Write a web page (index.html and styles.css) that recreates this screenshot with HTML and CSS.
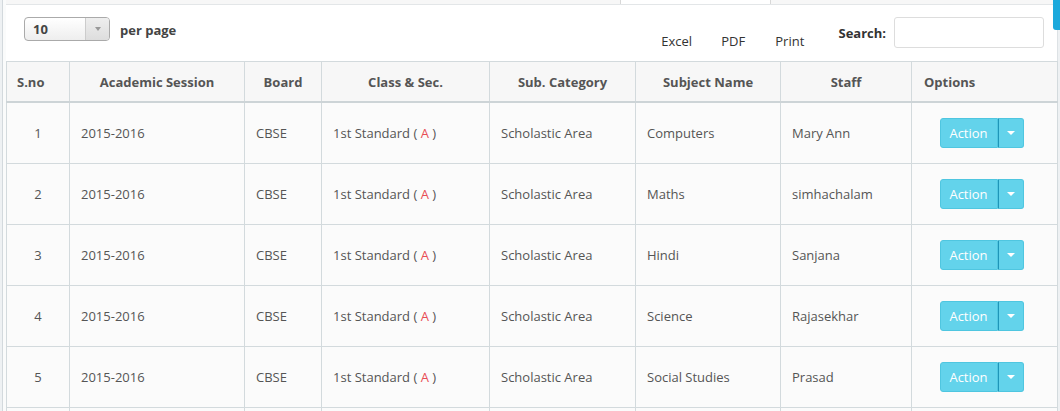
FILE: index.html
```html
<!DOCTYPE html>
<html>
<head>
<meta charset="utf-8">
<link rel="stylesheet" href="styles.css">
</head>
<body>
<div class="tab-blue"></div>
<div class="wrap">
  <div class="top-strip">
    <div class="strip-a"></div>
    <div class="strip-b"></div>
    <div class="strip-c"></div>
  </div>
  <div class="panel">
    <div class="toolbar">
      <div class="length">
        <div class="select">
          <span class="select-val">10</span>
          <span class="select-arrow"><span class="tri"></span></span>
        </div>
        <span class="per-page">per page</span>
      </div>
      <div class="exports">
        <span class="exp">Excel</span>
        <span class="exp">PDF</span>
        <span class="exp">Print</span>
      </div>
      <div class="search">
        <span class="search-label">Search:</span>
        <span class="search-input"></span>
      </div>
    </div>
    <table class="grid">
      <colgroup>
        <col class="c1"><col class="c2"><col class="c3"><col class="c4"><col class="c5"><col class="c6"><col class="c7"><col class="c8">
      </colgroup>
      <thead>
        <tr>
          <th class="left">S.no</th>
          <th>Academic Session</th>
          <th>Board</th>
          <th>Class &amp; Sec.</th>
          <th>Sub. Category</th>
          <th>Subject Name</th>
          <th>Staff</th>
          <th class="left opt">Options</th>
        </tr>
      </thead>
      <tbody>
        <tr>
          <td class="num">1</td><td>2015-2016</td><td>CBSE</td><td>1st Standard ( <span class="sec">A</span> )</td><td>Scholastic Area</td><td>Computers</td><td>Mary Ann</td>
          <td class="opts"><span class="btn-group"><span class="btn">Action</span><span class="btn caret-btn"><span class="caret"></span></span></span></td>
        </tr>
        <tr>
          <td class="num">2</td><td>2015-2016</td><td>CBSE</td><td>1st Standard ( <span class="sec">A</span> )</td><td>Scholastic Area</td><td>Maths</td><td>simhachalam</td>
          <td class="opts"><span class="btn-group"><span class="btn">Action</span><span class="btn caret-btn"><span class="caret"></span></span></span></td>
        </tr>
        <tr>
          <td class="num">3</td><td>2015-2016</td><td>CBSE</td><td>1st Standard ( <span class="sec">A</span> )</td><td>Scholastic Area</td><td>Hindi</td><td>Sanjana</td>
          <td class="opts"><span class="btn-group"><span class="btn">Action</span><span class="btn caret-btn"><span class="caret"></span></span></span></td>
        </tr>
        <tr>
          <td class="num">4</td><td>2015-2016</td><td>CBSE</td><td>1st Standard ( <span class="sec">A</span> )</td><td>Scholastic Area</td><td>Science</td><td>Rajasekhar</td>
          <td class="opts"><span class="btn-group"><span class="btn">Action</span><span class="btn caret-btn"><span class="caret"></span></span></span></td>
        </tr>
        <tr>
          <td class="num">5</td><td>2015-2016</td><td>CBSE</td><td>1st Standard ( <span class="sec">A</span> )</td><td>Scholastic Area</td><td>Social Studies</td><td>Prasad</td>
          <td class="opts"><span class="btn-group"><span class="btn">Action</span><span class="btn caret-btn"><span class="caret"></span></span></span></td>
        </tr>
        <tr class="empty">
          <td></td><td></td><td></td><td></td><td></td><td></td><td></td><td></td>
        </tr>
      </tbody>
    </table>
  </div>
</div>
</body>
</html>
```

FILE: styles.css
```css
* { box-sizing: border-box; }
html, body {
  margin: 0;
  padding: 0;
  height: 411px;
  overflow: hidden;
}
body {
  background: #eef1f3;
  font-family: "Open Sans", "Liberation Sans", sans-serif;
  font-size: 13px;
  color: #555;
  position: relative;
}
.tab-blue {
  position: absolute;
  right: 0;
  top: 0;
  width: 7px;
  height: 30px;
  background: #1ba9dc;
  border-bottom-left-radius: 3px;
  z-index: 5;
}
.wrap {
  margin-left: 2px;
  padding-left: 3px;
  border-left: 1px solid #d3d9dd;
  background: #fafbfb;
  width: 1056px;
}
.top-strip {
  height: 5px;
  display: flex;
  border-bottom: 1px solid #e3e6e8;
}
.strip-a { width: 614px; background: #f7f7f7; }
.strip-b { width: 151px; background: #ffffff; border-left: 1px solid #d8d8d8; border-right: 1px solid #d8d8d8; }
.strip-c { flex: 1; background: #f7f7f7; }
.panel {
  background: #fff;
  border-right: 1px solid #dde2e5;
}
.toolbar {
  height: 56px;
  display: flex;
  align-items: flex-start;
  padding: 12px 13px 0 18px;
}
.length {
  display: flex;
  align-items: center;
  height: 24px;
  white-space: nowrap;
}
.select {
  width: 86px;
  height: 24px;
  border: 1px solid #aaa;
  border-radius: 4px;
  background: linear-gradient(#ffffff, #eeeeee);
  display: flex;
  align-items: center;
  overflow: hidden;
}
.select-val {
  flex: 1;
  padding-left: 8px;
  font-weight: bold;
  color: #444;
  font-size: 13px;
}
.select-arrow {
  width: 24px;
  height: 100%;
  border-left: 1px solid #ccc;
  background: linear-gradient(#eeeeee, #dddddd);
  display: flex;
  align-items: center;
  justify-content: center;
}
.tri {
  width: 0; height: 0;
  border-left: 3px solid transparent;
  border-right: 3px solid transparent;
  border-top: 4px solid #999;
}
.per-page {
  margin-left: 10px;
  font-weight: bold;
  color: #444;
  position: relative;
  top: 1px;
}
.exports {
  margin-left: 485px;
  display: flex;
  padding-top: 15px;
  color: #333;
  white-space: nowrap;
}
.exp { display: inline-block; }
.exp:nth-child(1) { width: 60px; }
.exp:nth-child(2) { width: 54px; }
.exp:nth-child(3) { width: 63px; }
.search {
  display: flex;
  align-items: center;
  margin-left: auto;
}
.search-label {
  font-weight: bold;
  color: #333;
  margin-right: 8px;
}
.search-input {
  display: block;
  width: 150px;
  height: 31px;
  border: 1px solid #ddd;
  border-radius: 3px;
  background: #fff;
}
.grid {
  border-collapse: collapse;
  width: 1051px;
  table-layout: fixed;
  background: #fbfbfb;
}
.c1 { width: 63px; }
.c2 { width: 175px; }
.c3 { width: 77px; }
.c4 { width: 168px; }
.c5 { width: 146px; }
.c6 { width: 145px; }
.c7 { width: 131px; }
.c8 { width: 146px; }
.grid th, .grid td {
  border: 1px solid #d3dadd;
}
.grid th {
  background: #f7f7f7;
  font-weight: bold;
  color: #555;
  text-align: center;
  padding: 10px 10px 9px;
  line-height: 20px;
  border-bottom: 2px solid #cdd4d7;
}
.grid th.left { text-align: left; }
.grid th.opt { padding-left: 12px; }
.grid td {
  padding: 20px 11px;
  line-height: 20px;
  color: #555;
  white-space: nowrap;
}
.grid td.num { text-align: center; padding-left: 8px; padding-right: 8px; }
.sec { color: #e84c55; }
.grid td.opts { text-align: center; padding-top: 15px; padding-bottom: 15px; }
.btn-group {
  display: inline-flex;
  vertical-align: middle;
  margin-left: -6px;
}
.btn {
  display: inline-flex;
  align-items: center;
  justify-content: center;
  height: 30px;
  width: 58px;
  background: #63d3eb;
  color: #fff;
  border: 1px solid #4fc6e0;
  border-radius: 3px 0 0 3px;
  font-size: 13px;
  line-height: 20px;
}
.caret-btn {
  width: 26px;
  border-left: 1px solid #1f95b8;
  border-radius: 0 3px 3px 0;
}
.caret {
  width: 0; height: 0;
  border-left: 4px solid transparent;
  border-right: 4px solid transparent;
  border-top: 4px solid #fff;
}
```
